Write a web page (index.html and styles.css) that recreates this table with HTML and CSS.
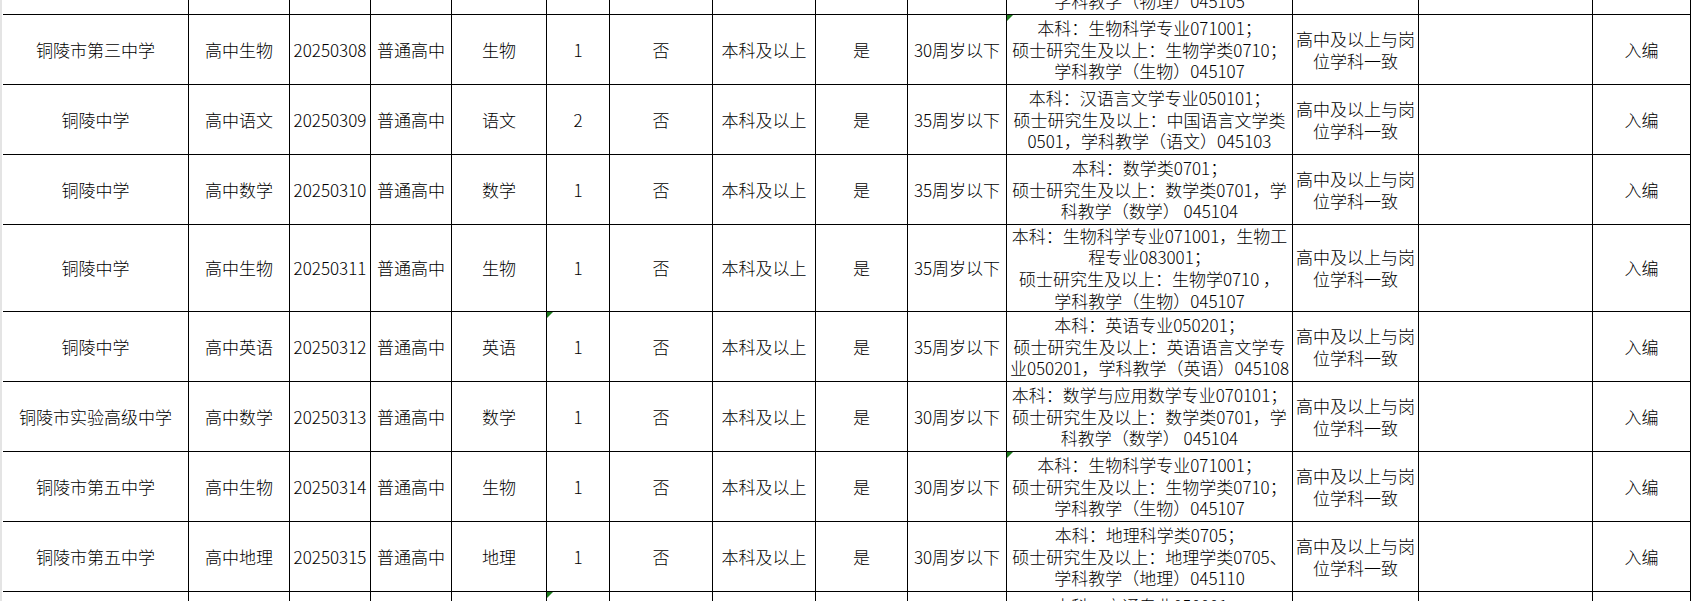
FILE: index.html
```html
<!DOCTYPE html>
<html lang="zh-CN">
<head>
<meta charset="utf-8">
<title>岗位表</title>
<link rel="stylesheet" href="styles.css">
</head>
<body>
<div class="viewport">
  <div class="gutter"></div>
  <div class="sheet">
    <!-- partial row (scrolled off) -->
    <div class="c">铜陵市第三中学</div><div class="c">高中物理</div><div class="c">20250307</div><div class="c">普通高中</div><div class="c">物理</div><div class="c">1</div><div class="c">否</div><div class="c">本科及以上</div><div class="c">是</div><div class="c">30周岁以下</div>
    <div class="c">本科：物理学类0702；<br>硕士研究生及以上：物理学类0702；<br>学科教学（物理）045105</div><div class="c">高中及以上与岗<br>位学科一致</div><div class="c"></div><div class="c">入编</div>

    <div class="c">铜陵市第三中学</div><div class="c">高中生物</div><div class="c">20250308</div><div class="c">普通高中</div><div class="c">生物</div><div class="c">1</div><div class="c">否</div><div class="c">本科及以上</div><div class="c">是</div><div class="c">30周岁以下</div>
    <div class="c flag">本科：生物科学专业071001；<br>硕士研究生及以上：生物学类0710；<br>学科教学（生物）045107</div><div class="c">高中及以上与岗<br>位学科一致</div><div class="c"></div><div class="c">入编</div>

    <div class="c">铜陵中学</div><div class="c">高中语文</div><div class="c">20250309</div><div class="c">普通高中</div><div class="c">语文</div><div class="c">2</div><div class="c">否</div><div class="c">本科及以上</div><div class="c">是</div><div class="c">35周岁以下</div>
    <div class="c">本科：汉语言文学专业050101；<br>硕士研究生及以上：中国语言文学类<br>0501，学科教学（语文）045103</div><div class="c">高中及以上与岗<br>位学科一致</div><div class="c"></div><div class="c">入编</div>

    <div class="c">铜陵中学</div><div class="c">高中数学</div><div class="c">20250310</div><div class="c">普通高中</div><div class="c">数学</div><div class="c">1</div><div class="c">否</div><div class="c">本科及以上</div><div class="c">是</div><div class="c">35周岁以下</div>
    <div class="c">本科：数学类0701；<br>硕士研究生及以上：数学类0701，学<br>科教学（数学） 045104</div><div class="c">高中及以上与岗<br>位学科一致</div><div class="c"></div><div class="c">入编</div>

    <div class="c">铜陵中学</div><div class="c">高中生物</div><div class="c">20250311</div><div class="c">普通高中</div><div class="c">生物</div><div class="c">1</div><div class="c">否</div><div class="c">本科及以上</div><div class="c">是</div><div class="c">35周岁以下</div>
    <div class="c">本科：生物科学专业071001，生物工<br>程专业083001；<br>硕士研究生及以上：生物学0710 ，<br>学科教学（生物）045107</div><div class="c">高中及以上与岗<br>位学科一致</div><div class="c"></div><div class="c">入编</div>

    <div class="c">铜陵中学</div><div class="c">高中英语</div><div class="c">20250312</div><div class="c">普通高中</div><div class="c">英语</div><div class="c flag">1</div><div class="c">否</div><div class="c">本科及以上</div><div class="c">是</div><div class="c">35周岁以下</div>
    <div class="c">本科：英语专业050201；<br>硕士研究生及以上：英语语言文学专<br>业050201，学科教学（英语）045108</div><div class="c">高中及以上与岗<br>位学科一致</div><div class="c"></div><div class="c">入编</div>

    <div class="c">铜陵市实验高级中学</div><div class="c">高中数学</div><div class="c">20250313</div><div class="c">普通高中</div><div class="c">数学</div><div class="c">1</div><div class="c">否</div><div class="c">本科及以上</div><div class="c">是</div><div class="c">30周岁以下</div>
    <div class="c">本科：数学与应用数学专业070101；<br>硕士研究生及以上：数学类0701，学<br>科教学（数学） 045104</div><div class="c">高中及以上与岗<br>位学科一致</div><div class="c"></div><div class="c">入编</div>

    <div class="c">铜陵市第五中学</div><div class="c">高中生物</div><div class="c">20250314</div><div class="c">普通高中</div><div class="c">生物</div><div class="c">1</div><div class="c">否</div><div class="c">本科及以上</div><div class="c">是</div><div class="c">30周岁以下</div>
    <div class="c flag">本科：生物科学专业071001；<br>硕士研究生及以上：生物学类0710；<br>学科教学（生物）045107</div><div class="c">高中及以上与岗<br>位学科一致</div><div class="c"></div><div class="c">入编</div>

    <div class="c">铜陵市第五中学</div><div class="c">高中地理</div><div class="c">20250315</div><div class="c">普通高中</div><div class="c">地理</div><div class="c">1</div><div class="c">否</div><div class="c">本科及以上</div><div class="c">是</div><div class="c">30周岁以下</div>
    <div class="c">本科：地理科学类0705；<br>硕士研究生及以上：地理学类0705、<br>学科教学（地理）045110</div><div class="c">高中及以上与岗<br>位学科一致</div><div class="c"></div><div class="c">入编</div>

    <!-- partial row (below the fold) -->
    <div class="c">铜陵市第五中学</div><div class="c">高中音乐</div><div class="c">20250316</div><div class="c">普通高中</div><div class="c">音乐</div><div class="c flag">1</div><div class="c">否</div><div class="c">本科及以上</div><div class="c">是</div><div class="c">30周岁以下</div>
    <div class="c">本科：交通专业050001；<br>硕士研究生及以上：艺术学类1301，<br>学科教学（音乐）045111</div><div class="c">高中及以上与岗<br>位学科一致</div><div class="c"></div><div class="c">入编</div>
  </div>
</div>
</body>
</html>
```

FILE: styles.css
```css
html, body {
  margin: 0;
  padding: 0;
  background: #fff;
  overflow: hidden;
}

.viewport {
  display: flex;
  align-items: flex-start;
  height: 601px;
  overflow: hidden;
}

.gutter {
  flex: 0 0 2px;
  align-self: stretch;
  background: #e4e4e4;
  margin-right: 1px;
}

.sheet {
  display: grid;
  grid-template-columns: 185px 100px 80px 80px 94px 62px 102px 102px 91px 98px 285px 125px 173px 97px;
  grid-template-rows: 70px 69px 69px 69px 86px 69px 69px 69px 69px 70px;
  gap: 1px;
  background: #000;
  border-right: 1px solid #000;
  margin-top: -56px;
  font-family: "Noto Sans CJK SC", "Noto Sans", sans-serif;
  font-size: 17px;
  font-weight: 300;
  line-height: 21.6px;
  color: #000;
}

.c {
  position: relative;
  display: flex;
  align-items: center;
  justify-content: center;
  text-align: center;
  white-space: nowrap;
  background: #fff;
  overflow: visible;
}

.flag::before {
  content: "";
  position: absolute;
  top: 0;
  left: 0;
  width: 0;
  height: 0;
  border-top: 6px solid #1d7a1d;
  border-right: 6px solid transparent;
}
```
